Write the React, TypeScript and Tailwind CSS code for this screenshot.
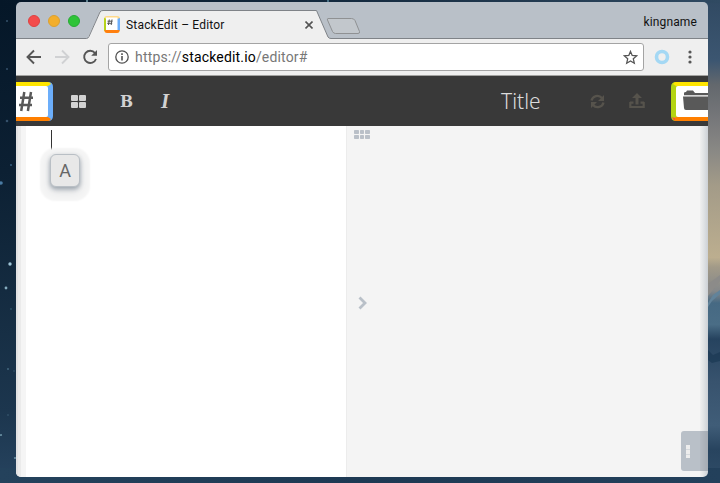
import React from "react";

const STARS: [number, number, number, string][] = [
  [10, 264, 1.7, "#9fc6d8"],
  [6, 288, 1.4, "#86adbf"],
  [11, 309, 0.9, "#2e5268"],
  [8, 369, 0.9, "#476d83"],
  [14, 371, 0.7, "#3c5f77"],
  [8, 415, 0.8, "#3f6178"],
  [1, 435, 1.1, "#6a90a3"],
  [15, 458, 1.1, "#6a8ea2"],
  [1, 183, 1.8, "#4a7ba3"],
  [11, 165, 1, "#345e80"],
  [7, 21, 1, "#34506a"],
  [7, 69, 1, "#34506a"],
  [7, 121, 1.3, "#34506a"],
  [87, 1, 1, "#7ea6b5"],
  [328, 1, 1, "#5c8ba0"],
];

function Wallpaper() {
  return (
    <svg className="absolute inset-0" width="720" height="483" viewBox="0 0 720 483">
      <defs>
        <linearGradient id="left" x1="0" y1="0" x2="0" y2="1">
          <stop offset="0" stopColor="#051728" />
          <stop offset="0.35" stopColor="#0c2033" />
          <stop offset="0.6" stopColor="#142b40" />
          <stop offset="0.85" stopColor="#1c364e" />
          <stop offset="1" stopColor="#26435f" />
        </linearGradient>
        <linearGradient id="top" x1="0" y1="0" x2="1" y2="0">
          <stop offset="0" stopColor="#051728" />
          <stop offset="0.5" stopColor="#152b40" />
          <stop offset="1" stopColor="#304a62" />
        </linearGradient>
        <linearGradient id="right" x1="0" y1="0" x2="0" y2="1">
          <stop offset="0" stopColor="#314a63" />
          <stop offset="0.12" stopColor="#3c5671" />
          <stop offset="0.17" stopColor="#63686d" />
          <stop offset="0.24" stopColor="#76777a" />
          <stop offset="0.31" stopColor="#8a8985" />
          <stop offset="0.38" stopColor="#a39b88" />
          <stop offset="0.53" stopColor="#bcae8f" />
          <stop offset="0.55" stopColor="#a29a88" />
          <stop offset="0.6" stopColor="#85888a" />
          <stop offset="0.625" stopColor="#466983" />
          <stop offset="0.67" stopColor="#4a6d86" />
          <stop offset="0.7" stopColor="#26435f" />
          <stop offset="0.79" stopColor="#38536e" />
          <stop offset="0.88" stopColor="#405d78" />
          <stop offset="0.93" stopColor="#28445f" />
          <stop offset="1" stopColor="#304d68" />
        </linearGradient>
        <linearGradient id="bottom" x1="0" y1="0" x2="1" y2="0">
          <stop offset="0" stopColor="#24425c" />
          <stop offset="0.5" stopColor="#1d3953" />
          <stop offset="1" stopColor="#23405b" />
        </linearGradient>
      </defs>
      <rect width="720" height="20" fill="url(#top)" />
      <rect y="3" width="30" height="480" fill="url(#left)" />
      <rect x="695" y="3" width="25" height="480" fill="url(#right)" />
      <rect y="468" width="720" height="15" fill="url(#bottom)" />
      <path d="M708 284l12-9v6l-12 15z" fill="#8c8b89" />
      <path d="M708 303l5-8 7-5v4l-8 7-4 6z" fill="#62839a" />
      <path d="M708 350l5 5 7-3v9l-8 2-4-3z" fill="#183650" opacity=".6" />
      {STARS.map(([x, y, r, c], i) => (
        <circle key={i} cx={x} cy={y} r={r} fill={c} />
      ))}
    </svg>
  );
}

function Favicon() {
  return (
    <svg width="16" height="17" viewBox="0 0 16 17" className="block shrink-0">
      <rect width="16" height="17" rx="3" fill="#ffd98a" />
      <path d="M0 2L3 3V14L0 15Z" fill="#b5d31b" />
      <path d="M16 2L13 3V14L16 15Z" fill="#6caefa" />
      <path d="M0.5 14H15.5V15Q15 17 13 17H3Q1 17 .5 15Z" fill="#ff7f0e" />
      <rect x="2" y="1.5" width="11.5" height="12.5" fill="#fff" />
      <path d="M5.3 3.5L4.5 9M8 3.5L7.2 9M3.5 5.2h5M3.2 7.3h5" stroke="#555" strokeWidth="1" />
    </svg>
  );
}

function TabStrip() {
  return (
    <div className="relative flex h-[37px] shrink-0 items-start bg-[#b9c0c8]">
      <svg className="absolute inset-0" width="692" height="37" viewBox="0 0 692 37">
        <path d="M0 36.5H71.5L84 9.5Q85 8.5 87 8.5H300.5L312 35Q313 36.5 315 36.5H692V37H0Z" fill="#efefef" />
        <path d="M0 36.5H70.500Q72 36.500 73 34.500L84 10Q85 8.500 87 8.500H300.500L312 35Q313 36.500 315 36.500H692" fill="none" stroke="#7f8388" strokeWidth="1" />
        <path d="M312 16.500H335.500Q338 16.500 339 18.500L343.500 29.500Q344 31.500 342 31.500H319.500Q317.500 31.500 316.500 29.500L311.500 18Q311 16.500 312 16.500Z" fill="#c2c7cc" stroke="#8f9193" />
      </svg>
      <div className="relative flex gap-2 pl-3 pt-[13px]">
        <span className="size-3 rounded-full border border-[#de4141] bg-[#f34b4b]" />
        <span className="size-3 rounded-full border border-[#dca02f] bg-[#f3ae2b]" />
        <span className="size-3 rounded-full border border-[#28aa35] bg-[#2fc438]" />
      </div>
      <div className="relative flex w-[225px] items-center pl-6 pt-[14px]">
        <span className="flex w-[22px]"><Favicon /></span>
        <span className="translate-y-px whitespace-nowrap text-[12px] leading-[17px] tracking-[0.19px] text-[#111]">StackEdit – Editor</span>
      </div>
      <svg className="relative mt-[19px]" width="8" height="8" viewBox="0 0 8 8"><path d="M.5.500l7 7M7.500.500l-7 7" stroke="#545454" strokeWidth="1.600" /></svg>
      <span className="relative ml-auto pr-[11px] pt-[12px] text-[12px] leading-4 tracking-[0.13px] text-[#111]">kingname</span>
    </div>
  );
}

function AddressBar() {
  return (
    <div className="flex h-[37px] shrink-0 items-center border-b border-[#a2a2a0] bg-[#efefef]">
      <svg width="92" height="28" viewBox="0 0 92 28" className="shrink-0" fill="none" strokeWidth="1.900">
        <path d="M25 14H12M18 7.500L11.500 14L18 20.500" stroke="#565656" />
        <path d="M39 14H52M46 7.500L52.500 14L46 20.500" stroke="#d0d1d3" />
        <path d="M79 10A6.100 6.100 0 1 0 80 16" stroke="#565656" />
        <path d="M81 7V12.700H75.200Z" fill="#565656" />
      </svg>
      <div className="flex h-7 w-[536px] shrink-0 items-center rounded-[3px] border border-[#a4a4a4] bg-white pl-[6px] pr-[5px]">
        <svg width="14" height="14" viewBox="0 0 14 14" className="shrink-0">
          <circle cx="7" cy="7" r="6.200" fill="none" stroke="#505050" strokeWidth="1.300" />
          <path d="M7 6V10.500M7 3.300V5" stroke="#505050" strokeWidth="1.600" />
        </svg>
        <span className="ml-[6px] text-[14px] leading-5 tracking-[0.17px] text-[#777]">
          https://<span className="text-black">stackedit.io</span>/editor#
        </span>
        <svg width="15" height="15" viewBox="0 0 15 15" className="ml-auto">
          <path d="M7.500 1.400L9.200 5.500L13.600 5.900L10.300 8.800L11.300 13.200L7.500 10.900L3.700 13.200L4.700 8.800L1.400 5.900L5.800 5.500Z" fill="none" stroke="#555" strokeWidth="1.300" />
        </svg>
      </div>
      <svg width="56" height="20" viewBox="0 0 56 20" className="ml-auto shrink-0">
        <circle cx="10" cy="10" r="5.500" fill="none" stroke="#a4d8f4" strokeWidth="3.600" />
        <g fill="#565656"><circle cx="38" cy="5" r="1.600" /><circle cx="38" cy="10" r="1.600" /><circle cx="38" cy="15" r="1.600" /></g>
      </svg>
    </div>
  );
}

function MenuButton() {
  return (
    <svg width="37" height="39" viewBox="0 0 37 39" className="shrink-0">
      <path d="M0 0H32Q37 0 37 5V34Q37 39 32 39H0Z" fill="#6caefa" />
      <path d="M0 0H32Q34 0 35 2L32 4H0Z" fill="#ffe500" />
      <path d="M0 39H32Q34 39 35 37L32 35H0Z" fill="#ff7f00" />
      <path d="M0 4H30Q32 4 32 6V33Q32 35 30 35H0Z" fill="#fff" />
      <path d="M8.300 10L5.200 29M15 10L11.900 29M4 15.800H17M3 23H16" fill="none" stroke="#595959" strokeWidth="2.500" />
    </svg>
  );
}

function FolderButton() {
  return (
    <svg width="37" height="39" viewBox="0 0 37 39" className="shrink-0">
      <path d="M37 0H5Q0 0 0 5V34Q0 39 5 39H37Z" fill="#b4d412" />
      <path d="M37 0H5Q3 0 2 2L5 4H37Z" fill="#ffe500" />
      <path d="M37 39H5Q3 39 2 37L5 35H37Z" fill="#ff7f00" />
      <path d="M1 35L4 36V38.800Q2 38 1 35Z" fill="#f75636" />
      <path d="M37 4H7Q5 4 5 6V33Q5 35 7 35H37Z" fill="#fff" />
      <path d="M13 13V11Q13 10 15 10L16 8.500H22L24 11H37V13.300H13Z" fill="#595959" />
      <path d="M12 14.500H37V28H15Q13 28 13 26Z" fill="#595959" />
    </svg>
  );
}

function EditorBar() {
  return (
    <div className="flex h-[50px] shrink-0 items-center bg-[#393939]">
      <MenuButton />
      <svg width="15" height="13" viewBox="0 0 15 13" className="ml-[18px] shrink-0" fill="#d2d2d2">
        <rect width="7" height="6" rx="1" /><rect x="8" width="7" height="6" rx="1" /><rect y="7" width="7" height="6" rx="1" /><rect x="8" y="7" width="7" height="6" rx="1" />
      </svg>
      <span className="ml-[34px] w-[14px] font-['DejaVu_Serif',serif] text-[17px] font-bold leading-5 text-[#d2d2d2]">
        <span className="inline-block origin-left scale-x-[.91]">B</span>
      </span>
      <span className="ml-[27px] w-3 font-['Liberation_Serif',serif] text-[21px] font-bold italic leading-5 text-[#d2d2d2]">I</span>
      <span className="ml-auto mr-[48px] w-[41px] whitespace-nowrap pb-px font-['Noto_Sans','Open_Sans',sans-serif] text-[21px] font-light leading-7 text-[#dcdcdc]">Title</span>
      <svg width="15" height="15" viewBox="0 0 15 15" className="shrink-0" fill="none" stroke="#56534c" strokeWidth="2.300">
        <path d="M1.500 6.500C2.500 2 8.500 0 12 4M13.500 8.500C12.500 13 6.500 15 3 11" />
        <path d="M14 1V7H8ZM1 14V8H7Z" fill="#56534c" stroke="none" />
      </svg>
      <svg width="16" height="16" viewBox="0 0 16 16" className="ml-6 mr-[26px] shrink-0">
        <path d="M1.300 9V14H14.700V9M1 9.700H4.500M11.500 9.700H15" fill="none" stroke="#56534c" strokeWidth="2.200" />
        <path d="M8 0L13 5H9.500V11.500H6.500V5H3Z" fill="#56534c" />
      </svg>
      <FolderButton />
    </div>
  );
}

function Workspace() {
  return (
    <div className="flex min-h-0 flex-1">
      <div className="flex w-[330px] shrink-0 bg-white">
        <div className="w-[2px] bg-[#e2e2e3]" />
        <div className="w-[3px] bg-[#ebebeb]" />
        <div className="w-[5px] bg-[#f5f5f5]" />
        <div className="flex flex-col pl-[25px] pt-1">
          <span className="h-5 w-px bg-[#333]" />
          <span className="-ml-px mt-1 flex h-[33px] w-[30px] items-center justify-center rounded-[6px] border border-[#b9bfc5] bg-[#e8e8e8] pb-px text-[18px] text-[#666] shadow-[0_2px_4px_#9ca5ae,0_4px_8px_#d5d7da,0_4px_2px_10px_#f5f5f5]">A</span>
        </div>
      </div>
      <div className="flex flex-1 flex-col border-l border-[#ececec] bg-[#f4f4f4]">
        <svg width="16" height="9" viewBox="0 0 16 9" className="ml-[7px] mt-1 shrink-0" fill="#bac0c8">
          <rect width="5" height="4" rx=".7" /><rect x="6" width="4" height="4" rx=".7" /><rect x="11" width="5" height="4" rx=".7" />
          <rect y="5" width="5" height="4" rx=".7" /><rect x="6" y="5" width="4" height="4" rx=".7" /><rect x="11" y="5" width="5" height="4" rx=".7" />
        </svg>
        <svg width="9" height="14" viewBox="0 0 9 14" className="ml-[11px] mt-[157px] shrink-0"><path d="M1.500 1.500L7 7L1.500 12.500" fill="none" stroke="#b9c0c8" strokeWidth="2.800" /></svg>
        <div className="mb-[6px] ml-auto mt-auto flex h-10 w-[19px] items-center rounded-l-[3px] bg-[#b9c0c8] pl-[5px]">
          <span className="flex flex-col gap-px bg-[#d5d9dd]"><i className="size-1 bg-[#ededed]" /><i className="size-1 bg-[#ededed]" /><i className="h-[3px] w-1 bg-[#ededed]" /></span>
        </div>
      </div>
      <div className="flex w-2 shrink-0 flex-col bg-linear-to-r from-[#f0f0f0] via-[#dfe2e4] to-[#ccd0d5]">
        <div className="mb-[6px] mt-auto h-10 bg-linear-to-r from-[#b5bbc3] to-[#a5abb3]" />
      </div>
    </div>
  );
}

export default function App() {
  return (
    <div className="relative h-[483px] w-[720px] overflow-hidden bg-[#122539] pl-4 pt-[2px] font-[Roboto,sans-serif]">
      <Wallpaper />
      <main className="relative flex h-[475px] w-[692px] flex-col overflow-hidden rounded-[5px]">
        <TabStrip />
        <AddressBar />
        <EditorBar />
        <Workspace />
      </main>
    </div>
  );
}
